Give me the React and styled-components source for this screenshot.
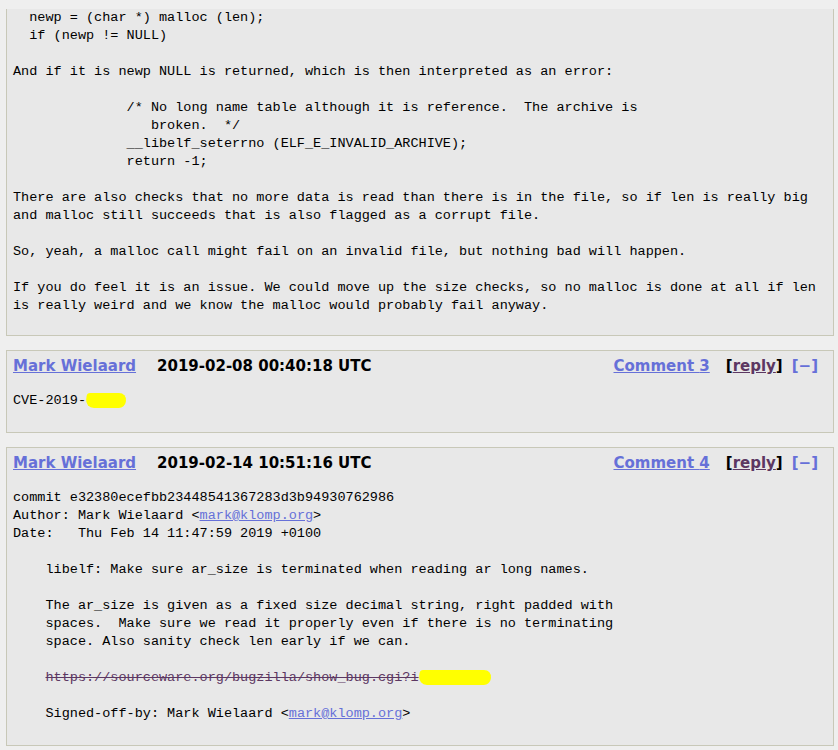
import React from 'react';
import styled, { createGlobalStyle } from 'styled-components';

const GlobalStyle = createGlobalStyle`
  html, body {
    margin: 0;
    padding: 0;
    background: #efefef;
  }
`;

const Page = styled.div`
  padding: 0 4px 0 6px;
`;

const Box = styled.div`
  background: #e8e8e8;
  border: 1px solid #c8c8b8;
  border-top: ${(p) => (p.cut ? 'none' : '1px solid #c8c8b8')};
  margin-bottom: 14px;
`;

const Header = styled.div`
  display: flex;
  align-items: center;
  height: 20px;
  padding: 5px 15px 0 6px;
  font-family: 'DejaVu Sans', Verdana, sans-serif;
  font-weight: bold;
  font-size: 15px;
  line-height: 20px;
  white-space: nowrap;
`;

const Link = styled.a`
  color: ${(p) => (p.visited ? '#5c3762' : '#6670d8')};
  text-decoration: underline;
  cursor: pointer;
`;

const When = styled.span`
  color: #000;
  margin-left: 21px;
`;

const Spacer = styled.span`
  flex: 1;
`;

const Bracket = styled.span`
  color: #000;
  margin-left: 16px;
`;

const Collapse = styled.span`
  color: #6670d8;
  margin-left: 9px;
`;

const Pre = styled.pre`
  margin: ${(p) => (p.cut ? '9px 0 20px' : '16px 0 22px')};
  padding: 0 6px;
  font-family: 'Liberation Mono', 'DejaVu Sans Mono', monospace;
  font-size: 13.52px;
  line-height: 18px;
  color: #000;
  white-space: pre;
`;

const Mail = styled.a`
  color: #6670d8;
  text-decoration: underline;
`;

const Struck = styled.a`
  color: #5c3762;
  text-decoration: line-through;
`;

const Redact = styled.span`
  display: inline-block;
  vertical-align: middle;
  width: ${(p) => p.w}px;
  height: 15px;
  background: #ffff00;
  border-radius: 3px 8px 6px 9px;
  transform: skewX(-8deg);
`;

function CommentHeader({ num, when }) {
  return (
    <Header>
      <Link>Mark Wielaard</Link>
      <When>{when}</When>
      <Spacer />
      <Link>Comment {num}</Link>
      <Bracket>
        [<Link visited>reply</Link>]
      </Bracket>
      <Collapse>[−]</Collapse>
    </Header>
  );
}

const first = `  newp = (char *) malloc (len);
  if (newp != NULL)

And if it is newp NULL is returned, which is then interpreted as an error:

              /* No long name table although it is reference.  The archive is
                 broken.  */
              __libelf_seterrno (ELF_E_INVALID_ARCHIVE);
              return -1;

There are also checks that no more data is read than there is in the file, so if len is really big
and malloc still succeeds that is also flagged as a corrupt file.

So, yeah, a malloc call might fail on an invalid file, but nothing bad will happen.

If you do feel it is an issue. We could move up the size checks, so no malloc is done at all if len
is really weird and we know the malloc would probably fail anyway.`;

export default function App() {
  return (
    <Page>
      <GlobalStyle />
      <Box cut>
        <Pre cut>{first}</Pre>
      </Box>

      <Box>
        <CommentHeader num={3} when="2019-02-08 00:40:18 UTC" />
        <Pre>
          CVE-2019-<Redact w={40} />
        </Pre>
      </Box>

      <Box>
        <CommentHeader num={4} when="2019-02-14 10:51:16 UTC" />
        <Pre>
          {'commit e32380ecefbb23448541367283d3b94930762986\nAuthor: Mark Wielaard <'}
          <Mail>mark@klomp.org</Mail>
          {'>\nDate:   Thu Feb 14 11:47:59 2019 +0100\n\n    libelf: Make sure ar_size is terminated when reading ar long names.\n\n    The ar_size is given as a fixed size decimal string, right padded with\n    spaces.  Make sure we read it properly even if there is no terminating\n    space. Also sanity check len early if we can.\n\n    '}
          <Struck>https://sourceware.org/bugzilla/show_bug.cgi?i</Struck>
          <Redact w={72} />
          {'\n\n    Signed-off-by: Mark Wielaard <'}
          <Mail>mark@klomp.org</Mail>
          {'>'}
        </Pre>
      </Box>
    </Page>
  );
}
